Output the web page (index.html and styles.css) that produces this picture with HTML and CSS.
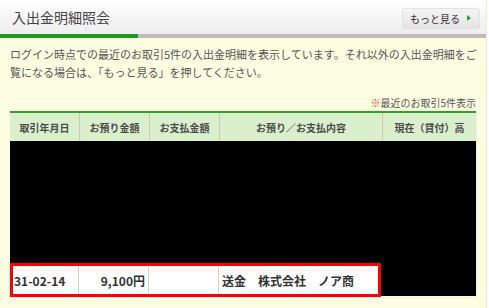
FILE: index.html
```html
<!DOCTYPE html>
<html lang="ja">
<head>
    <meta charset="UTF-8">
    <title>入出金明細照会</title>
    <link rel="stylesheet" href="styles.css">
</head>
<body>
    <div class="panel">
        <div class="panel-head">
            <h2 class="panel-title">入出金明細照会</h2>
            <a class="more-btn" href="#">もっと見る<span class="more-arrow"></span></a>
        </div>
        <div class="tab-bar"><span class="tab-bar-on"></span></div>

        <div class="panel-body">
            <p class="lead">ログイン時点での最近のお取引5件の入出金明細を表示しています。それ以外の入出金明細をご覧になる場合は、「もっと見る」を押してください。</p>
            <p class="note"><span class="note-mark">※</span>最近のお取引5件表示</p>

            <div class="history">
                <div class="history-head">
                    <div class="th">取引年月日</div>
                    <div class="th">お預り金額</div>
                    <div class="th">お支払金額</div>
                    <div class="th">お預り／お支払内容</div>
                    <div class="th">現在（貸付）高</div>
                </div>
                <!-- hidden rows -->
                <div class="masked"></div>
                <div class="history-last">
                    <div class="picked">
                        <div class="td">31-02-14</div>
                        <div class="td td-num">9,100円</div>
                        <div class="td"></div>
                        <div class="td">送金　株式会社　ノア商</div>
                    </div>
                    <div class="masked-tail"></div>
                </div>
            </div>
        </div>
    </div>
</body>
</html>
```

FILE: styles.css
```css
body {
    margin: 0;
    background: #ffffff;
    font-family: "Noto Sans CJK JP", "Noto Sans", sans-serif;
    color: #555555;
}
.panel {
    width: 486px;
    height: 308px;
    background: #fdfde2;
    border-right: 1px solid #ececd6;
}
.panel-head {
    height: 34px;
    display: flex;
    align-items: center;
    justify-content: space-between;
    padding: 0 6px 0 12px;
    background: linear-gradient(#ffffff, #eeeeee);
    box-sizing: border-box;
}
.panel-title {
    margin: 0;
    font-size: 14px;
    font-weight: normal;
    color: #444444;
}
.more-btn {
    display: flex;
    align-items: center;
    gap: 7px;
    height: 21px;
    padding: 0 8px 0 7px;
    border: 1px solid #e2e2e2;
    border-radius: 3px;
    background: linear-gradient(#f4f4f4, #e4e4e4);
    font-size: 10px;
    color: #333333;
    text-decoration: none;
    box-sizing: border-box;
    margin-top: 2px;
}
.more-arrow {
    width: 0;
    height: 0;
    border-left: 4px solid #2ca02c;
    border-top: 3px solid transparent;
    border-bottom: 3px solid transparent;
}
.tab-bar {
    height: 4px;
    background: #bdbdbd;
    display: flex;
}
.tab-bar-on {
    width: 138px;
    background: #1f991f;
}
.panel-body {
    padding: 7px 11px 0 10px;
}
.lead {
    margin: 0;
    font-size: 11px;
    line-height: 18px;
    width: 472px;
}
.note {
    margin: 15px 0 1px;
    font-size: 10px;
    line-height: 14px;
    text-align: right;
    width: 466px;
}
.note-mark {
    color: #e23030;
}
.history {
    width: 466px;
    border-top: 2px solid #33a02c;
    box-shadow: 1px 1px 0 #f0f0e4;
}
.history-head {
    display: grid;
    grid-template-columns: 70px 70px 70px 163px 1fr;
    height: 28px;
    background: #daf0cd;
}
.th {
    display: flex;
    align-items: center;
    justify-content: center;
    font-size: 10px;
    font-weight: bold;
    color: #4a4a4a;
    border-right: 1px solid #cfcaa9;
}
.th:last-child {
    border-right: none;
}
.masked {
    height: 122px;
    background: #000000;
}
.history-last {
    display: flex;
    height: 34px;
}
.picked {
    width: 371px;
    display: grid;
    grid-template-columns: 66px 70px 70px 1fr;
    border: 3px solid #ff0000;
    background: #ffffff;
    box-sizing: border-box;
}
.td {
    display: flex;
    align-items: center;
    padding: 0 3px;
    font-size: 12px;
    font-weight: bold;
    color: #333333;
    border-right: 1px solid #d8d4bc;
}
.td:first-child {
    padding-left: 1px;
}
.td:last-child {
    border-right: none;
}
.td-num {
    justify-content: flex-end;
}
.masked-tail {
    flex: 1;
    background: #000000;
    margin-bottom: 1px;
}
```
